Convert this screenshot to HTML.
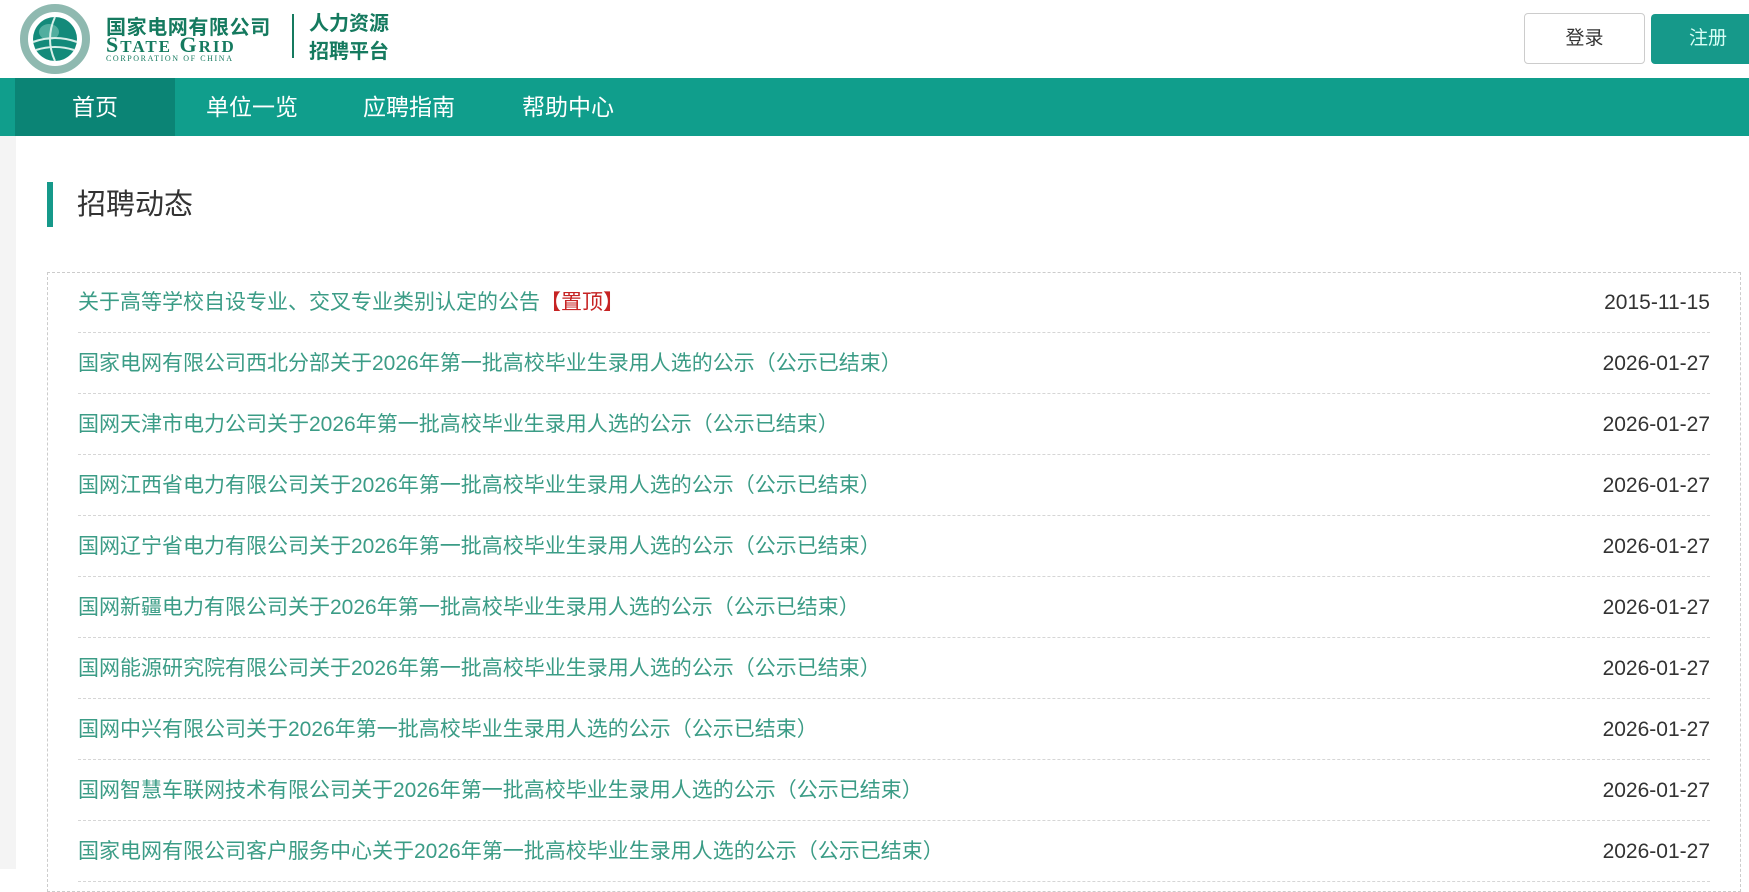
<!DOCTYPE html>
<html><head><meta charset="utf-8"><style>
*{margin:0;padding:0;box-sizing:border-box}
body{width:1749px;height:869px;overflow:hidden;background:#fff;font-family:"Liberation Sans","Noto Sans CJK SC",sans-serif;position:relative}
.abs{position:absolute}
.nav{left:0;top:78px;width:1749px;height:58px;background:#109e8c}
.nav span{position:absolute;top:0;line-height:58px;color:#fff;font-size:23px}
.home{left:15px;top:0;width:160px;height:58px;background:#0b8475}
.row{position:absolute;left:78px;width:1632px;height:61px;border-bottom:1px dashed #d6d6d6;font-size:21px;line-height:62px}
.row .t{color:#3b9c86;position:absolute;left:0}
.row .d{color:#333;position:absolute;right:0}
</style></head><body>
<div class="abs" style="left:0;top:136px;width:16px;height:733px;background:#f4f4f4"></div>
<svg class="abs" style="left:20px;top:4px" width="72" height="70" viewBox="0 0 72 70">
<circle cx="35" cy="35" r="31" fill="none" stroke="#8fb9b0" stroke-width="8"/>
<circle cx="35" cy="35" r="22" fill="#138a7a"/>
<ellipse cx="29" cy="28" rx="10" ry="8" fill="#7cc6b8" opacity=".6"/>
<path d="M13 38 Q35 30 57 38 M16 46 Q35 40 54 46 M35 13 Q25 35 35 57" stroke="#d8efe9" stroke-width="2" fill="none"/>
</svg>
<div class="abs" style="left:106px;top:11px;font-size:20px;font-weight:bold;color:#157a5f;letter-spacing:0.6px">国家电网有限公司</div>
<div class="abs" style="left:106px;top:32px;font-family:'Liberation Serif',serif;font-size:22px;font-weight:bold;color:#157a5f;letter-spacing:2px">S<span style="font-size:17px">TATE</span>&nbsp;G<span style="font-size:17px">RID</span></div>
<div class="abs" style="left:106px;top:54px;font-family:'Liberation Serif',serif;font-size:8px;color:#157a5f;letter-spacing:1.6px">CORPORATION OF CHINA</div>
<div class="abs" style="left:292px;top:14px;width:2px;height:44px;background:#157a5f"></div>
<div class="abs" style="left:309px;top:10px;font-size:20px;font-weight:bold;color:#157a5f;line-height:28px">人力资源<br>招聘平台</div>
<div class="abs" style="left:1524px;top:13px;width:121px;height:51px;border:1px solid #ccc;border-radius:4px;text-align:center;line-height:49px;font-size:19px;color:#333">登录</div>
<div class="abs" style="left:1651px;top:14px;width:110px;height:50px;background:#16998a;border-radius:4px;line-height:50px;padding-left:38px;font-size:19px;color:#d8fff6">注册</div>
<div class="abs nav"><div class="abs home"></div>
<span style="left:72px">首页</span><span style="left:206px">单位一览</span><span style="left:363px">应聘指南</span><span style="left:522px">帮助中心</span></div>
<div class="abs" style="left:47px;top:182px;width:6px;height:45px;background:#16998a"></div>
<div class="abs" style="left:77px;top:185px;font-size:29px;line-height:40px;color:#333">招聘动态</div>
<div class="abs" style="left:47px;top:272px;width:1694px;height:620px;border:1px dashed #ccc"></div>
<div class="row" style="top:272px"><span class="t">关于高等学校自设专业、交叉专业类别认定的公告<span style="color:#c62323">【置顶】</span></span><span class="d">2015-11-15</span></div>
<div class="row" style="top:333px"><span class="t">国家电网有限公司西北分部关于2026年第一批高校毕业生录用人选的公示（公示已结束）</span><span class="d">2026-01-27</span></div>
<div class="row" style="top:394px"><span class="t">国网天津市电力公司关于2026年第一批高校毕业生录用人选的公示（公示已结束）</span><span class="d">2026-01-27</span></div>
<div class="row" style="top:455px"><span class="t">国网江西省电力有限公司关于2026年第一批高校毕业生录用人选的公示（公示已结束）</span><span class="d">2026-01-27</span></div>
<div class="row" style="top:516px"><span class="t">国网辽宁省电力有限公司关于2026年第一批高校毕业生录用人选的公示（公示已结束）</span><span class="d">2026-01-27</span></div>
<div class="row" style="top:577px"><span class="t">国网新疆电力有限公司关于2026年第一批高校毕业生录用人选的公示（公示已结束）</span><span class="d">2026-01-27</span></div>
<div class="row" style="top:638px"><span class="t">国网能源研究院有限公司关于2026年第一批高校毕业生录用人选的公示（公示已结束）</span><span class="d">2026-01-27</span></div>
<div class="row" style="top:699px"><span class="t">国网中兴有限公司关于2026年第一批高校毕业生录用人选的公示（公示已结束）</span><span class="d">2026-01-27</span></div>
<div class="row" style="top:760px"><span class="t">国网智慧车联网技术有限公司关于2026年第一批高校毕业生录用人选的公示（公示已结束）</span><span class="d">2026-01-27</span></div>
<div class="row" style="top:821px"><span class="t">国家电网有限公司客户服务中心关于2026年第一批高校毕业生录用人选的公示（公示已结束）</span><span class="d">2026-01-27</span></div>
</body></html>
